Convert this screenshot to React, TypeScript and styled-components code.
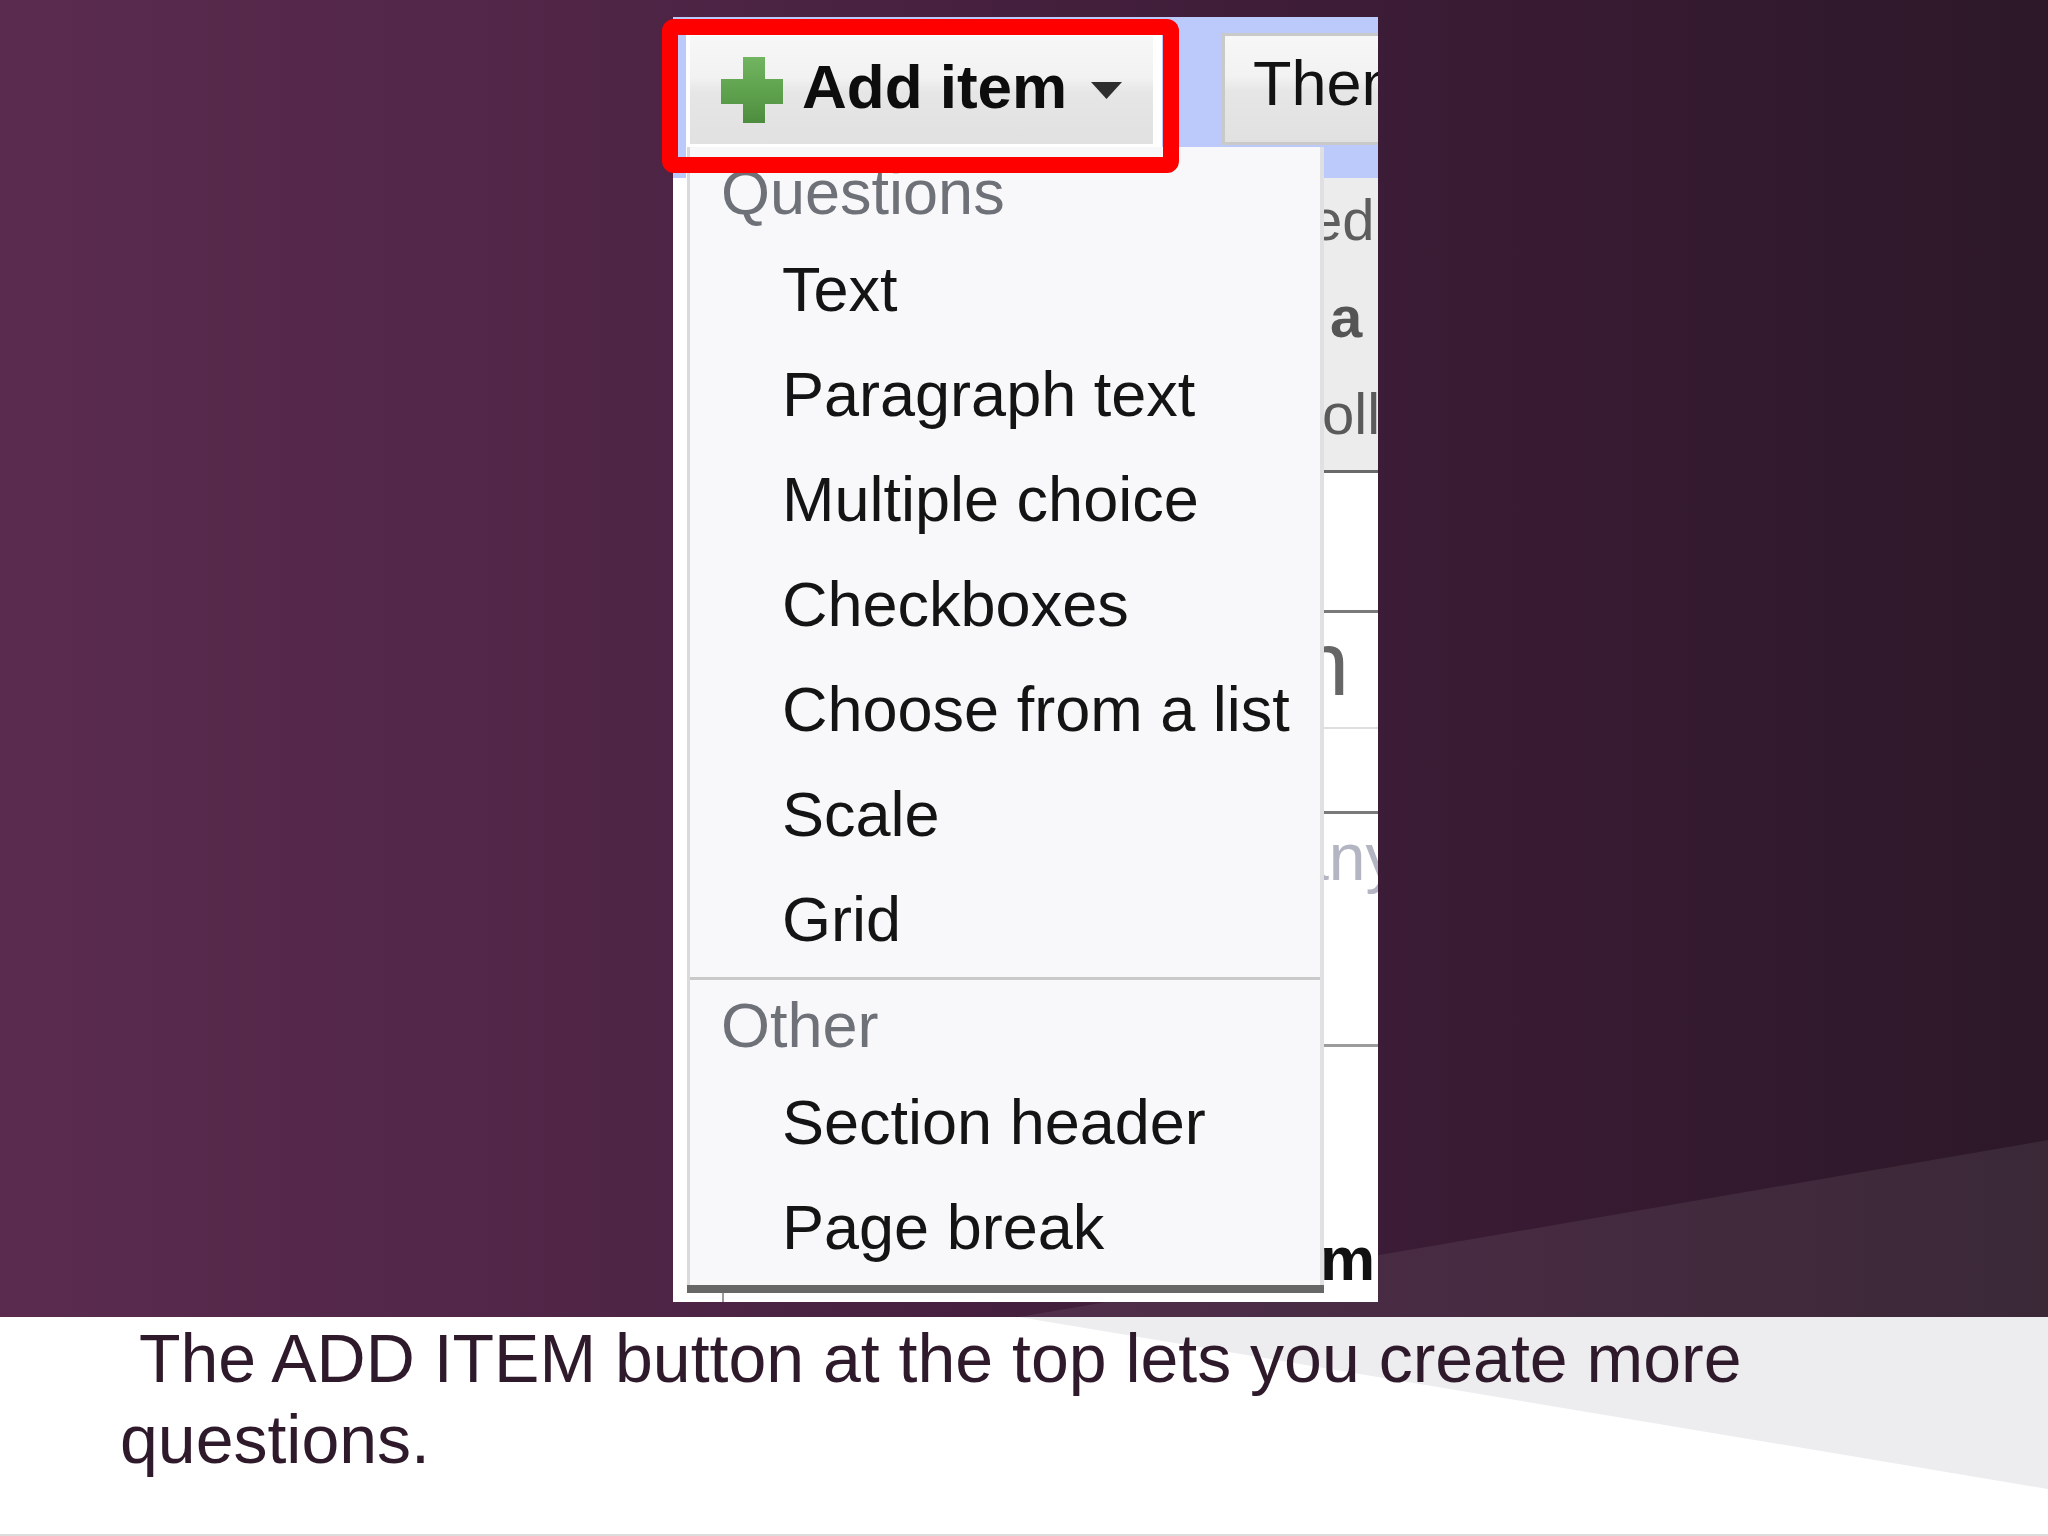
import React from "react";
import styled, { createGlobalStyle } from "styled-components";

const Global = createGlobalStyle`
  html, body { margin: 0; padding: 0; width: 2048px; height: 1536px; overflow: hidden; background: #fff; }
  * { box-sizing: border-box; }
`;

const Slide = styled.div`
  width: 2048px;
  height: 1536px;
  display: flex;
  flex-direction: column;
  font-family: "Liberation Sans", Arial, Helvetica, sans-serif;
`;

const TopBand = styled.section`
  position: relative;
  flex: none;
  height: 1317px;
  padding: 17px 0 0 673px;
  overflow: hidden;
  background: linear-gradient(90deg, #5a2b4e 0%, #4f2546 30%, #3d1c37 64%, #2c1828 100%);
  &::before {
    content: "";
    position: absolute;
    inset: 0;
    background: rgba(255, 255, 255, 0.07);
    clip-path: polygon(1019px 1317px, 2048px 1140px, 2048px 1317px);
  }
`;

const Screenshot = styled.div`
  position: relative;
  z-index: 1;
  width: 705px;
  height: 1285px;
  background: #ffffff;
  overflow: hidden;
  display: flex;
  flex-direction: column;
`;

const Toolbar = styled.div`
  flex: none;
  height: 161px;
  background: #bbcafa;
  display: flex;
  align-items: flex-start;
  gap: 60px;
  padding: 16px 0 0 13px;
`;

const ActiveSlot = styled.div`
  flex: none;
  width: 476px;
  height: 145px;
  background: #ffffff;
  padding: 3px 0 0 4px;
`;

const buttonFace = `
  background: linear-gradient(180deg, #f7f7f7 0%, #f2f2f2 38%, #e6e6e6 52%, #e1e1e1 100%);
`;

const AddButton = styled.div`
  width: 463px;
  height: 108px;
  ${buttonFace}
  display: flex;
  align-items: center;
  padding-left: 31px;
`;

const AddLabel = styled.span`
  margin: -7px 0 0 19px;
  font-size: 62px;
  line-height: 62px;
  font-weight: 700;
  color: #0d0d0d;
  white-space: nowrap;
`;

const Caret = styled.svg`
  flex: none;
  margin: 1px 0 0 24px;
`;

const ThemeButton = styled.div`
  flex: none;
  width: 300px;
  height: 112px;
  ${buttonFace}
  border: 3px solid #c9c9c9;
  border-right: none;
  display: flex;
  align-items: center;
  padding-left: 28px;
`;

const ThemeLabel = styled.span`
  margin-top: -12px;
  font-size: 63px;
  line-height: 63px;
  color: #121212;
  white-space: nowrap;
`;

const PageArea = styled.div`
  flex: 1;
  display: flex;
  min-height: 0;
`;

const LeftPane = styled.div`
  flex: none;
  width: 651px;
  display: flex;
  align-items: flex-end;
  padding-left: 49px;
`;

const Tick = styled.div`
  width: 2px;
  height: 9px;
  background: #9b9b9b;
`;

const RightPane = styled.div`
  flex: none;
  width: 54px;
  display: flex;
  flex-direction: column;
  overflow: hidden;
`;

const GrayBlock = styled.div`
  flex: none;
  height: 292px;
  background: #ececec;
  display: flex;
  flex-direction: column;
  gap: 14px;
`;

const Rule = styled.div<{ $h: number; $c: string }>`
  flex: none;
  height: ${(p) => p.$h}px;
  background: ${(p) => p.$c};
`;

const Blank = styled.div<{ $h: number; $pt?: number; $end?: boolean }>`
  flex: ${(p) => (p.$h > 0 ? "none" : "1")};
  height: ${(p) => (p.$h > 0 ? `${p.$h}px` : "auto")};
  padding-top: ${(p) => p.$pt ?? 0}px;
  display: flex;
  flex-direction: column;
  justify-content: ${(p) => (p.$end ? "flex-end" : "flex-start")};
  padding-bottom: ${(p) => (p.$end ? 12 : 0)}px;
  background: #ffffff;
`;

const Frag = styled.span<{ $size: number; $lh: number; $shift: number; $color: string; $bold?: boolean }>`
  display: block;
  white-space: nowrap;
  font-size: ${(p) => p.$size}px;
  line-height: ${(p) => p.$lh}px;
  margin-left: ${(p) => p.$shift}px;
  color: ${(p) => p.$color};
  font-weight: ${(p) => (p.$bold ? 700 : 400)};
`;

const Menu = styled.div`
  position: absolute;
  z-index: 2;
  left: 14px;
  top: 130px;
  width: 637px;
  display: flex;
  flex-direction: column;
`;

const MenuBody = styled.div`
  background: #f8f8fa;
  border-left: 3px solid #dadada;
  border-right: 4px solid #e0e0e2;
  padding-bottom: 5px;
  display: flex;
  flex-direction: column;
`;

const GroupLabel = styled.div`
  height: 90px;
  line-height: 90px;
  font-size: 63px;
  color: #6f7178;
  padding-left: 31px;
  white-space: nowrap;
`;

const MenuItem = styled.div`
  height: 105px;
  line-height: 105px;
  font-size: 63px;
  color: #141414;
  padding-left: 92px;
  white-space: nowrap;
`;

const MenuDivider = styled.div`
  height: 3px;
  margin-top: 5px;
  background: #c9c9c9;
`;

const MenuFooter = styled.div`
  height: 8px;
  background: #676767;
`;

const Highlight = styled.div`
  position: absolute;
  z-index: 3;
  left: 662px;
  top: 19px;
  width: 517px;
  height: 154px;
  border: 16px solid #ff0000;
  border-radius: 12px;
`;

const BottomBand = styled.section`
  position: relative;
  flex: 1;
  background: #ffffff;
  box-shadow: inset 0 -2px 0 #dcdcdc;
  &::before {
    content: "";
    position: absolute;
    inset: 0;
    background: #edecef;
    clip-path: polygon(1019px 0, 2048px 0, 2048px 172px);
  }
`;

const Caption = styled.p`
  position: relative;
  z-index: 1;
  margin: 0;
  width: 1900px;
  padding: 1px 0 0 120px;
  font-size: 68px;
  line-height: 81px;
  color: #2f1a2b;
  white-space: pre-wrap;
`;

const PlusIcon = () => (
  <svg width="62" height="66" viewBox="0 0 62 66" style={{ flex: "none" }}>
    <defs>
      <linearGradient id="plusGreen" x1="0" y1="0" x2="0" y2="1">
        <stop offset="0" stopColor="#72b560" />
        <stop offset="0.6" stopColor="#5c9f4b" />
        <stop offset="1" stopColor="#4d8c3e" />
      </linearGradient>
    </defs>
    <path d="M22 0H44V22H62V47H44V66H22V47H0V22H22Z" fill="url(#plusGreen)" />
  </svg>
);

const questions = [
  "Text",
  "Paragraph text",
  "Multiple choice",
  "Checkboxes",
  "Choose from a list",
  "Scale",
  "Grid",
];
const others = ["Section header", "Page break"];

export default function App() {
  return (
    <>
      <Global />
      <Slide>
        <TopBand>
          <Screenshot>
            <Toolbar>
              <ActiveSlot>
                <AddButton>
                  <PlusIcon />
                  <AddLabel>Add item</AddLabel>
                  <Caret width="31" height="17" viewBox="0 0 31 17">
                    <path d="M0 0H31L15.5 17Z" fill="#2e2e2e" />
                  </Caret>
                </AddButton>
              </ActiveSlot>
              <ThemeButton>
                <ThemeLabel>Theme</ThemeLabel>
              </ThemeButton>
            </Toolbar>
            <PageArea>
              <LeftPane>
                <Tick />
              </LeftPane>
              <RightPane>
                <GrayBlock>
                  <Frag $size={58} $lh={83} $shift={-14} $color="#5d5d5d">ed</Frag>
                  <Frag $size={58} $lh={83} $shift={6} $color="#555555" $bold>a</Frag>
                  <Frag $size={58} $lh={83} $shift={-2} $color="#5a5a5a">oll</Frag>
                </GrayBlock>
                <Rule $h={3} $c="#6a6a6a" />
                <Blank $h={137} />
                <Rule $h={3} $c="#7a7a7a" />
                <Blank $h={114} $pt={6}>
                  <Frag $size={90} $lh={90} $shift={-25} $color="#666666">n</Frag>
                </Blank>
                <Rule $h={2} $c="#dedede" />
                <Blank $h={82} />
                <Rule $h={3} $c="#7a7a7a" />
                <Blank $h={230} $pt={10}>
                  <Frag $size={66} $lh={66} $shift={-32} $color="#b3b6c2">any</Frag>
                </Blank>
                <Rule $h={3} $c="#9c9c9c" />
                <Blank $h={0} $end>
                  <Frag $size={62} $lh={62} $shift={-4} $color="#111111" $bold>m</Frag>
                </Blank>
              </RightPane>
            </PageArea>
            <Menu>
              <MenuBody>
                <GroupLabel>Questions</GroupLabel>
                {questions.map((q) => (
                  <MenuItem key={q}>{q}</MenuItem>
                ))}
                <MenuDivider />
                <GroupLabel>Other</GroupLabel>
                {others.map((o) => (
                  <MenuItem key={o}>{o}</MenuItem>
                ))}
              </MenuBody>
              <MenuFooter />
            </Menu>
          </Screenshot>
          <Highlight />
        </TopBand>
        <BottomBand>
          <Caption>{" The ADD ITEM button at the top lets you create more questions."}</Caption>
        </BottomBand>
      </Slide>
    </>
  );
}
